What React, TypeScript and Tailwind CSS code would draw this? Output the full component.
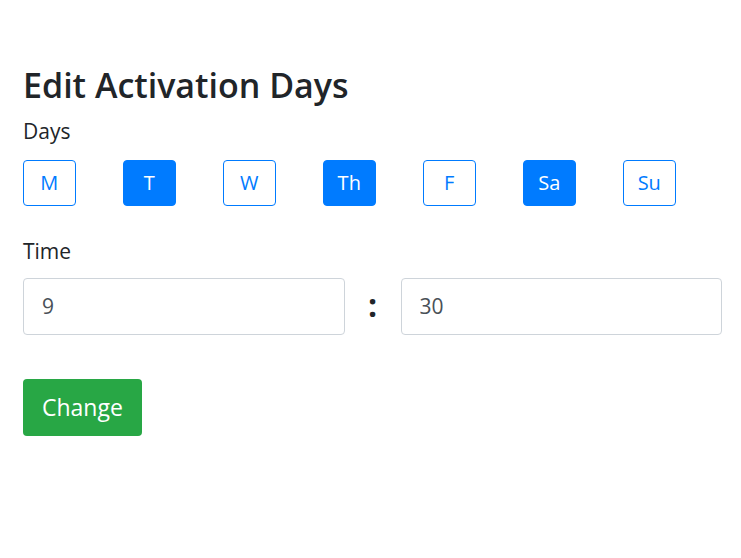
import React from "react";

const days = [
  { label: "M", active: false },
  { label: "T", active: true },
  { label: "W", active: false },
  { label: "Th", active: true },
  { label: "F", active: false },
  { label: "Sa", active: true },
  { label: "Su", active: false },
];

export default function App() {
  return (
    <div
      className="min-h-screen bg-white pl-[23px] pr-[19px] pt-[65px] text-[#212529]"
      style={{ fontFamily: '"Open Sans", "Noto Sans", sans-serif' }}
    >
      <h2 className="text-[34px] font-semibold leading-[1.2] mb-[12px]">Edit Activation Days</h2>

      {/* Days */}
      <div className="text-[21px] leading-[26px] mb-[16px]">Days</div>
      <div className="flex gap-[47.5px]">
        {days.map((d) => (
          <button
            key={d.label}
            className={
              d.active
                ? "w-[52.5px] h-[46px] rounded-[4px] border border-[#007bff] bg-[#007bff] text-white text-[20px]"
                : "w-[52.5px] h-[46px] rounded-[4px] border border-[#007bff] bg-white text-[#007bff] text-[20px]"
            }
          >
            {d.label}
          </button>
        ))}
      </div>

      {/* Time */}
      <div className="text-[21px] leading-[26px] mt-[32px] mb-[14px]">Time</div>
      <div className="flex items-center">
        <input
          defaultValue="9"
          className="flex-1 min-w-0 h-[57px] rounded-[4px] border border-[#ced4da] px-[18px] text-[21px] text-[#495057] outline-none"
        />
        <div className="w-[56px] text-center text-[32px] font-bold leading-none pb-[2px]">:</div>
        <input
          defaultValue="30"
          className="flex-1 min-w-0 h-[57px] rounded-[4px] border border-[#ced4da] px-[18px] text-[21px] text-[#495057] outline-none"
        />
      </div>

      <button className="mt-[44px] h-[57px] px-[19px] rounded-[4px] bg-[#28a745] text-white text-[23px]">
        Change
      </button>
    </div>
  );
}
